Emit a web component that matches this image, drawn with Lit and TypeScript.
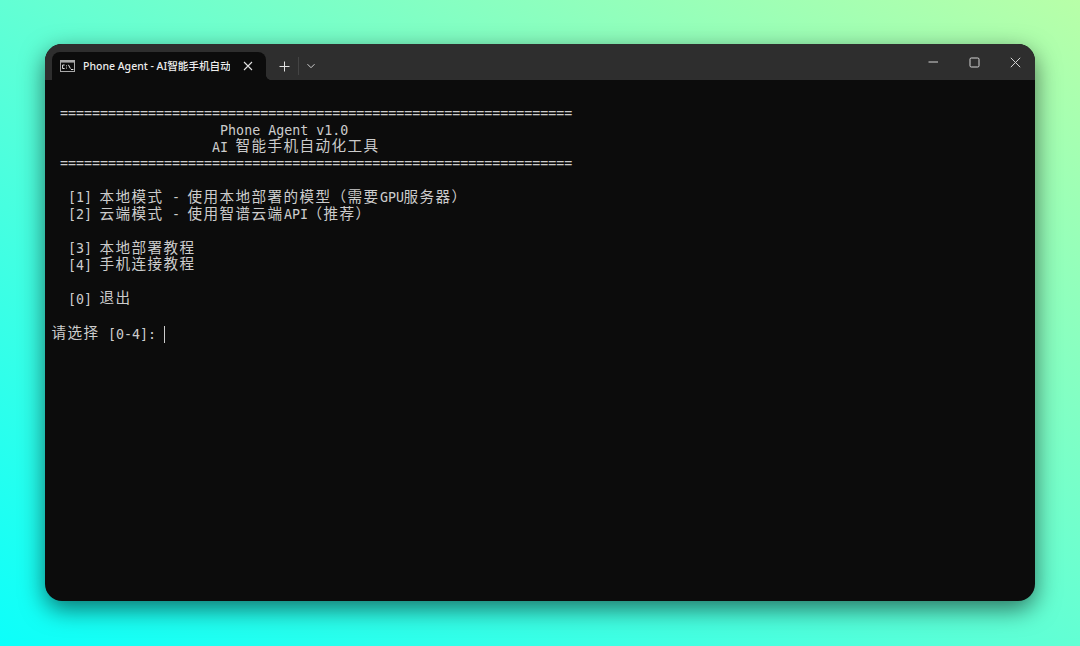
import { LitElement, html, css } from "lit";
import { customElement } from "lit/decorators.js";

const RULE = "=".repeat(64);
const LINES = [
  " " + RULE,
  " ".repeat(21) + "Phone Agent v1.0",
  " ".repeat(20) + "AI 智能手机自动化工具",
  " " + RULE,
  "",
  "  [1] 本地模式 - 使用本地部署的模型（需要GPU服务器）",
  "  [2] 云端模式 - 使用智谱云端API（推荐）",
  "",
  "  [3] 本地部署教程",
  "  [4] 手机连接教程",
  "",
  "  [0] 退出",
  "",
];

function segments(line: string) {
  return line
    .split(/([\u3000-\u9fff\uff00-\uffef]+)/)
    .map((s, i) => (i % 2 ? html`<span class="cjk">${s}</span>` : s));
}

@customElement("app-root")
export class AppRoot extends LitElement {
  static styles = css`
    :host {
      display: flex;
      box-sizing: border-box;
      width: 1080px;
      height: 646px;
      padding: 44px 45px 45px 45px;
      overflow: hidden;
      background: linear-gradient(to top right, #0cfffa 0%, #62ffd4 50%, #b8ffa8 100%);
    }
    .window {
      flex: 1;
      display: flex;
      flex-direction: column;
      border-radius: 17px;
      overflow: hidden;
      background: #0c0c0c;
      box-shadow: 0 8px 24px rgba(0, 0, 0, 0.55);
    }
    .bar {
      height: 36px;
      flex: none;
      display: flex;
      align-items: flex-end;
      padding-left: 7px;
      background: #2e2e2e;
      color: #e6e6e6;
    }
    .tab {
      position: relative;
      width: 214px;
      height: 28px;
      box-sizing: border-box;
      padding: 0 12px 0 8px;
      display: flex;
      align-items: center;
      gap: 8px;
      background: #0c0c0c;
      border-radius: 8px 8px 0 0;
    }
    .tab::after {
      content: "";
      position: absolute;
      right: -5px;
      bottom: 0;
      width: 5px;
      height: 5px;
      background: radial-gradient(circle at 100% 0, transparent 4.6px, #0c0c0c 5.2px);
    }
    .title {
      width: 147px;
      flex: none;
      overflow: hidden;
      white-space: nowrap;
      font: 500 10.5px/14px "Noto Sans", "Noto Sans CJK SC", sans-serif;
      color: #ececec;
      margin-right: 4.5px;
    }
    .title span {
      font-size: 10.6px;
    }
    svg {
      display: block;
      flex: none;
    }
    .tools {
      height: 28px;
      display: flex;
      align-items: center;
      padding-left: 13px;
      gap: 8px;
    }
    .sep {
      width: 1px;
      height: 18px;
      background: #444;
    }
    .controls {
      margin-left: auto;
      align-self: stretch;
      display: flex;
      align-items: center;
      gap: 30px;
      padding-right: 14px;
    }
    .term {
      flex: 1;
      box-sizing: border-box;
      padding: 25.66px 7px 0;
      font-family: "DejaVu Sans Mono", "Noto Sans CJK SC", monospace;
      font-size: 13.3px;
      color: #cccccc;
    }
    .line {
      height: 16.93px;
      line-height: 16.93px;
      white-space: pre;
    }
    .cjk {
      font-family: "Noto Sans CJK SC", sans-serif;
      font-size: 14.6px;
      line-height: 0;
      letter-spacing: 1.4px;
      margin-left: -0.6px;
      margin-right: 0.6px;
      vertical-align: 0.5px;
    }
    .caret {
      display: inline-block;
      width: 1px;
      height: 17px;
      background: #cccccc;
      vertical-align: -4px;
    }
  `;

  render() {
    return html`<div class="window">
      <div class="bar">
        <div class="tab">
          <svg width="15" height="12" viewBox="0 0 15 12">
            <rect x="0.5" y="0.5" width="14" height="11" fill="#0c0c0c" stroke="#a8a8a8" />
            <rect x="1" y="1" width="13" height="1.6" fill="#a8a8a8" />
            <path
              d="M4.6 5H2.6v3.5h2M6.5 5.4v.9M6.5 7.6v.9M8.4 4.8l2 3.8M11 9.5h2.4"
              fill="none"
              stroke="#e4e4e4"
              stroke-width="1"
            />
          </svg>
          <div class="title">Phone Agent - AI<span>智能手机自动化工具</span></div>
          <svg width="10" height="10" viewBox="0 0 10 10">
            <path d="M1 1l8 8M9 1l-8 8" stroke="#e0e0e0" stroke-width="1.1" fill="none" />
          </svg>
        </div>
        <div class="tools">
          <svg width="11" height="11" viewBox="0 0 11 11">
            <path d="M5.5 .5v10M.5 5.5h10" stroke="#e0e0e0" stroke-width="1" fill="none" />
          </svg>
          <div class="sep"></div>
          <svg width="8" height="6" viewBox="0 0 8 6">
            <path d="M.5 1.2L4 4.7l3.5-3.5" stroke="#d0d0d0" stroke-width="1" fill="none" />
          </svg>
        </div>
        <div class="controls">
          <svg width="11" height="11" viewBox="0 0 11 11">
            <path d="M.5 5h9.5" stroke="#d4d4d4" stroke-width="1" fill="none" />
          </svg>
          <svg width="11" height="11" viewBox="0 0 11 11">
            <rect x="1" y="1" width="9" height="9" rx="1.2" stroke="#d4d4d4" stroke-width="1" fill="none" />
          </svg>
          <svg width="11" height="11" viewBox="0 0 11 11">
            <path d="M.8 .8l9.4 9.4M10.2 .8L.8 10.2" stroke="#d4d4d4" stroke-width="1" fill="none" />
          </svg>
        </div>
      </div>
      <div class="term">
        ${LINES.map((l) => html`<div class="line">${segments(l)}</div>`)}
        <div class="line">${segments("请选择 [0-4]: ")}<span class="caret"></span></div>
      </div>
    </div>`;
  }
}
